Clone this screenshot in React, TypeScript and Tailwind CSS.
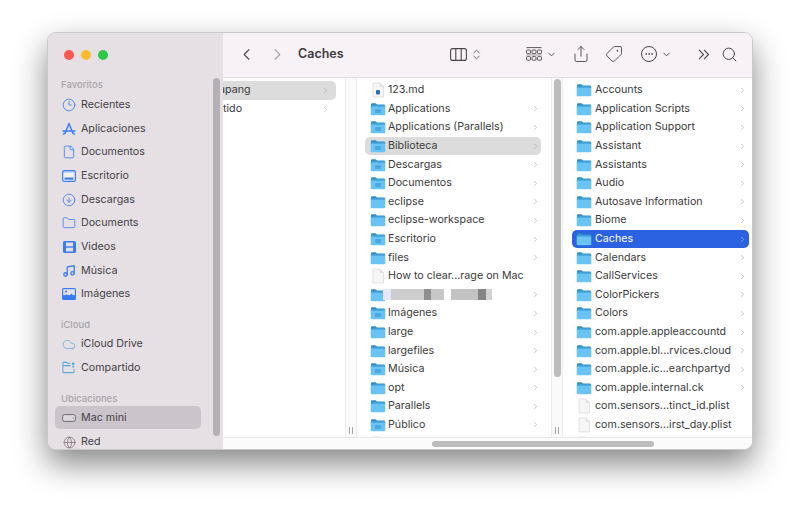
import { ChevronLeft, ChevronRight, ChevronDown, ChevronsUpDown, Share, Tag, Ellipsis, Search, Clock3, File, CircleArrowDown, Folder as FolderLine, Music, Cloud, Globe } from 'lucide-react'

type Row = { name: string; kind?: 'folder' | 'file' | 'doc' | 'blur'; glyph?: boolean; arrow?: boolean; selected?: boolean; active?: boolean }

const col2: Row[] = [
  { name: '123.md', kind: 'doc', arrow: false },
  { name: 'Applications', glyph: true },
  { name: 'Applications (Parallels)', glyph: true },
  { name: 'Biblioteca', glyph: true, active: true },
  { name: 'Descargas', glyph: true },
  { name: 'Documentos', glyph: true },
  { name: 'eclipse' },
  { name: 'eclipse-workspace' },
  { name: 'Escritorio', glyph: true },
  { name: 'files' },
  { name: 'How to clear...rage on Mac', kind: 'file', arrow: false },
  { name: '', kind: 'blur' },
  { name: 'Imágenes', glyph: true },
  { name: 'large' },
  { name: 'largefiles' },
  { name: 'Música', glyph: true },
  { name: 'opt' },
  { name: 'Parallels' },
  { name: 'Público', glyph: true },
  { name: '', kind: 'file', arrow: false },
]

const col3: Row[] = [
  { name: 'Accounts' },
  { name: 'Application Scripts' },
  { name: 'Application Support' },
  { name: 'Assistant' },
  { name: 'Assistants' },
  { name: 'Audio' },
  { name: 'Autosave Information' },
  { name: 'Biome' },
  { name: 'Caches', selected: true },
  { name: 'Calendars' },
  { name: 'CallServices' },
  { name: 'ColorPickers' },
  { name: 'Colors' },
  { name: 'com.apple.appleaccountd' },
  { name: 'com.apple.bl...rvices.cloud' },
  { name: 'com.apple.ic...earchpartyd' },
  { name: 'com.apple.internal.ck' },
  { name: 'com.sensors...tinct_id.plist', kind: 'file', arrow: false },
  { name: 'com.sensors...irst_day.plist', kind: 'file', arrow: false },
  { name: '', kind: 'file', arrow: false },
]

function FolderIcon({ glyph }: { glyph?: boolean }) {
  return (
    <svg width="16" height="14" viewBox="0 0 16 14" className="shrink-0">
      <path d="M1 2.4C1 1.7 1.5 1.2 2.2 1.2h3.4l1.4 1.2h6.8c.7 0 1.2.5 1.2 1.2V5H1z" fill="#2f8fc9" />
      <rect x="0.7" y="3.6" width="14.6" height="9.6" rx="1.2" fill="#69c4f5" />
      <rect x="0.7" y="3.4" width="14.6" height="1" rx="0.5" fill="#3393cf" />
      {glyph && <rect x="5" y="7" width="6" height="4" rx="1" fill="#4aa8de" />}
    </svg>
  )
}

function FileIcon({ doc }: { doc?: boolean }) {
  return (
    <svg width="16" height="16" viewBox="0 0 16 16" className="shrink-0">
      <path d="M3 1h7l3.5 3.5V15H3z" fill="#f6f6f6" stroke="#d6d6d6" strokeWidth="0.7" />
      <path d="M10 1v3.5h3.5" fill="#e6e6e6" stroke="#d6d6d6" strokeWidth="0.5" />
      {doc && <rect x="6" y="8" width="4" height="4.5" rx="1" fill="#2b6cb8" />}
    </svg>
  )
}

function BlurName() {
  return (
    <div className="-ml-[5px] flex h-[11px] items-center">
      <div className="h-[11px] w-[8px] bg-[#e4e8f8]" />
      <div className="h-[11px] w-[33px] bg-[#cdcdcd]" />
      <div className="h-[11px] w-[7px] bg-[#8f8f8f]" />
      <div className="h-[11px] w-[13px] bg-[#c6c6c6]" />
      <div className="w-[7px]" />
      <div className="h-[11px] w-[27px] bg-[#c2c2c2]" />
      <div className="h-[11px] w-[8px] bg-[#858585]" />
      <div className="h-[11px] w-[6px] bg-[#d2d2d2]" />
    </div>
  )
}

function FileRow({ row, third }: { row: Row; third?: boolean }) {
  const kind = row.kind ?? 'folder'
  const showArrow = row.arrow !== false
  let bg = ''
  if (row.selected) bg = 'bg-[#2a62e2] text-white'
  else if (row.active) bg = 'bg-[#dcdcdc]'
  return (
    <div className={`flex h-[18.6px] items-center rounded-[5px] ${third ? 'ml-[9px] mr-[3px] gap-[3px] pl-[4px] pr-[2px]' : 'ml-[8px] mr-[10px] gap-[2px] pl-[5px] pr-[1px]'} ${bg}`}>
      <div className="flex w-[16px] shrink-0 justify-center">
        {kind === 'folder' && <FolderIcon glyph={row.glyph} />}
        {kind === 'blur' && <FolderIcon />}
        {kind === 'file' && <FileIcon />}
        {kind === 'doc' && <FileIcon doc />}
      </div>
      {kind === 'blur' ? <BlurName /> : <span className="flex-1 truncate">{row.name}</span>}
      {kind === 'blur' && <div className="flex-1" />}
      {showArrow && <ChevronRight size={9} strokeWidth={1.6} className={row.selected ? 'text-[#b9cdf8]' : 'text-[#a8a8a8]'} />}
    </div>
  )
}

function SideRow({ icon, label, active, low }: { icon: React.ReactNode; label: string; active?: boolean; low?: boolean }) {
  return (
    <div className={`ml-[7px] mr-[22px] flex h-[23.7px] shrink-0 items-center gap-[5px] rounded-[5px] pl-[7px] ${low ? 'pt-[2px]' : ''} ${active ? 'bg-[#cbc5cb]' : ''}`}>
      <div className="flex w-[14px] shrink-0 justify-center">{icon}</div>
      <span>{label}</span>
    </div>
  )
}

function SideHead({ label, top }: { label: string; top?: boolean }) {
  return <div className={`ml-[13px] shrink-0 text-[9.5px] font-medium leading-[14px] text-[#a9a4a9] ${top ? 'h-[15px]' : 'mt-[12px] h-[14px]'}`}>{label}</div>
}

const blue = '#3a7df2'

function AppsIcon() {
  return (
    <svg width="14" height="14" viewBox="0 0 14 14" fill="none" stroke={blue} strokeWidth="1.5" strokeLinecap="round">
      <path d="M7 1.5L3 11.5M7 1.5l4 10M1 9h12M1.5 12l1.5-1M12.5 12L11 11" />
    </svg>
  )
}

function DesktopIcon() {
  return (
    <svg width="14" height="12" viewBox="0 0 14 12">
      <rect x="0.6" y="0.6" width="12.8" height="10.8" rx="1.6" fill="#fff" fillOpacity="0.5" stroke={blue} strokeWidth="1.2" />
      <rect x="2.6" y="7.5" width="8.8" height="2.2" fill={blue} />
      <rect x="1.2" y="1.2" width="11.6" height="1.6" fill={blue} fillOpacity="0.3" />
    </svg>
  )
}

function VideoIcon() {
  return (
    <svg width="13" height="12" viewBox="0 0 13 12">
      <rect x="0" y="0" width="13" height="12" rx="1.6" fill={blue} />
      <rect x="3" y="1.5" width="7" height="3.8" fill="#e6e0e5" />
      <rect x="3" y="6.7" width="7" height="3.8" fill="#e6e0e5" />
    </svg>
  )
}

function PhotoIcon() {
  return (
    <svg width="14" height="12" viewBox="0 0 14 12">
      <rect x="0" y="0" width="14" height="12" rx="1.6" fill={blue} />
      <rect x="1.2" y="1.2" width="11.6" height="6" fill="#e6e0e5" />
      <circle cx="4" cy="3.5" r="1.1" fill={blue} />
      <path d="M1.2 9l3.4-3 2.4 2 2.4-2.6 3.4 3.6V10.8H1.2z" fill={blue} />
    </svg>
  )
}

function SharedIcon() {
  return (
    <svg width="15" height="13" viewBox="0 0 15 13" fill="none" stroke="#5aa9d6" strokeWidth="1.1">
      <path d="M1 3.5V11a1 1 0 001 1h10a1 1 0 001-1V8M1 3.5V2a1 1 0 011-1h3l1 1h3M1 4.5h8" />
      <circle cx="12" cy="2.6" r="1.5" fill="#5aa9d6" stroke="none" />
      <path d="M12 4.5v2" strokeWidth="2" />
    </svg>
  )
}

function DiskIcon() {
  return (
    <svg width="14" height="8" viewBox="0 0 14 8" fill="none">
      <rect x="0.6" y="0.6" width="12.8" height="6.8" rx="1.8" fill="#dcd7dc" stroke="#6f6b70" strokeWidth="1" />
      <circle cx="11" cy="4" r="0.6" fill="#6f6b70" />
    </svg>
  )
}

function ColumnsIcon() {
  return (
    <svg width="17" height="13" viewBox="0 0 17 13" fill="none" stroke="#4a464a" strokeWidth="1.1">
      <rect x="0.6" y="0.6" width="15.8" height="11.8" rx="2" />
      <path d="M5.8 0.6v11.8M11.2 0.6v11.8" />
    </svg>
  )
}

function GridIcon() {
  return (
    <svg width="16" height="14" viewBox="0 0 16 14" fill="none" stroke="#4a464a" strokeWidth="0.9">
      <path d="M0.5 0.6h15" />
      <rect x="0.5" y="3" width="4" height="3.6" rx="0.8" />
      <rect x="6" y="3" width="4" height="3.6" rx="0.8" />
      <rect x="11.5" y="3" width="4" height="3.6" rx="0.8" />
      <path d="M0.5 8h15" strokeWidth="0.5" />
      <rect x="0.5" y="9.6" width="4" height="3.6" rx="0.8" />
      <rect x="6" y="9.6" width="4" height="3.6" rx="0.8" />
      <rect x="11.5" y="9.6" width="4" height="3.6" rx="0.8" />
    </svg>
  )
}

function DoubleArrow() {
  return (
    <svg width="12" height="11" viewBox="0 0 12 11" fill="none" stroke="#4a464a" strokeWidth="1.1">
      <path d="M1 0.8l4.5 4.7L1 10.2M6 0.8l4.5 4.7L6 10.2" />
    </svg>
  )
}

function Lane({ thumb }: { thumb?: boolean }) {
  return (
    <div className="relative w-[12px] shrink-0 border-x border-[#ececec] bg-[#fafafa]">
      {thumb && <div className="absolute left-[2px] top-[1px] h-[298px] w-[7px] rounded-full bg-[#bcbcbc]" />}
      <div className="absolute bottom-[3px] left-[3px] flex gap-[2px]">
        <div className="h-[7px] w-px bg-[#a5a5a5]" />
        <div className="h-[7px] w-px bg-[#a5a5a5]" />
      </div>
    </div>
  )
}

export default function App() {
  return (
    <div className="h-[512px] w-[800px] overflow-hidden bg-white pl-[47px] pt-[32px] font-['Inter',sans-serif] text-[10.7px] text-[#3b3b3b]">
      <div className="flex h-[418px] w-[706px] overflow-hidden rounded-[9px] border border-[#c9c9c9] bg-white shadow-[0_14px_32px_rgba(0,0,0,0.48)]">
        <aside className="relative flex w-[175px] shrink-0 flex-col overflow-hidden bg-[#e6e0e5] text-[#444044]">
          <div className="flex h-[45px] shrink-0 items-center gap-[7px] pb-[2px] pl-[16px]">
            <div className="h-[10px] w-[10px] rounded-full bg-[#fc5753]" />
            <div className="h-[10px] w-[10px] rounded-full bg-[#fdbc2e]" />
            <div className="h-[10px] w-[10px] rounded-full bg-[#33c748]" />
          </div>
          <SideHead label="Favoritos" top />
          <SideRow label="Recientes" icon={<Clock3 size={14} strokeWidth={1.4} color={blue} />} />
          <SideRow label="Aplicaciones" icon={<AppsIcon />} />
          <SideRow label="Documentos" icon={<File size={14} strokeWidth={1.4} color={blue} />} />
          <SideRow label="Escritorio" icon={<DesktopIcon />} />
          <SideRow label="Descargas" icon={<CircleArrowDown size={14} strokeWidth={1.4} color={blue} />} />
          <SideRow label="Documents" icon={<FolderLine size={14} strokeWidth={1.4} color={blue} />} />
          <SideRow label="Videos" icon={<VideoIcon />} />
          <SideRow label="Música" icon={<Music size={14} strokeWidth={2.2} color={blue} />} />
          <SideRow label="Imágenes" icon={<PhotoIcon />} />
          <SideHead label="iCloud" />
          <SideRow label="iCloud Drive" icon={<Cloud size={15} strokeWidth={1.2} color="#5aa9d6" />} />
          <SideRow label="Compartido" icon={<SharedIcon />} />
          <SideHead label="Ubicaciones" />
          <SideRow label="Mac mini" active low icon={<DiskIcon />} />
          <SideRow label="Red" low icon={<Globe size={13} strokeWidth={1.3} color="#6f6b70" />} />
          <div className="absolute left-[165px] top-[45px] h-[358px] w-[7px] rounded-full bg-[#b5b0b5]" />
        </aside>

        <main className="flex min-w-0 flex-1 flex-col">
          <header className="flex h-[45px] shrink-0 items-center border-b border-[#e2dde1] bg-[#f8f1f6] pb-[2px] text-[#4a464a]">
            <ChevronLeft size={19} strokeWidth={1.4} className="ml-[14px]" />
            <ChevronRight size={19} strokeWidth={1.4} className="ml-[12px] text-[#a5a1a5]" />
            <span className="ml-[11px] w-[152px] text-[12.5px] font-semibold text-[#3e3a3e]">Caches</span>
            <ColumnsIcon />
            <ChevronsUpDown size={13} strokeWidth={1.5} className="ml-[3px]" />
            <div className="ml-[43px]"><GridIcon /></div>
            <ChevronDown size={11} strokeWidth={2} className="ml-[4px]" />
            <Share size={18} strokeWidth={1.2} className="ml-[15px]" />
            <Tag size={18} strokeWidth={1.2} className="ml-[15px] rotate-90" />
            <div className="ml-[18px] flex h-[16px] w-[16px] items-center justify-center rounded-full border border-[#4a464a]">
              <Ellipsis size={10} strokeWidth={2} />
            </div>
            <ChevronDown size={11} strokeWidth={2} className="ml-[4px]" />
            <div className="ml-[26px]"><DoubleArrow /></div>
            <Search size={17} strokeWidth={1.4} className="ml-[11px]" />
          </header>

          <div className="flex min-h-0 flex-1 overflow-hidden">
            <div className="w-[122px] shrink-0 overflow-hidden pt-[3px]">
              <div className="mr-[9px] flex h-[19px] items-center rounded-r-[5px] bg-[#dcdcdc] pr-[6px]">
                <span className="-ml-[4px] flex-1">apang</span>
                <ChevronRight size={9} strokeWidth={1.6} className="text-[#a8a8a8]" />
              </div>
              <div className="mr-[9px] flex h-[18.6px] items-center pr-[6px]">
                <span className="flex-1">tido</span>
                <ChevronRight size={9} strokeWidth={1.6} className="text-[#a8a8a8]" />
              </div>
            </div>
            <Lane />
            <div className="w-[194px] shrink-0 overflow-hidden pt-[3px]">
              {col2.map((row, i) => (
                <FileRow key={i} row={row} />
              ))}
            </div>
            <Lane thumb />
            <div className="min-w-0 flex-1 overflow-hidden pt-[3px]">
              {col3.map((row, i) => (
                <FileRow key={i} row={row} third />
              ))}
            </div>
          </div>

          <div className="relative h-[12px] shrink-0 border-t border-[#e8e8e8] bg-[#fbfbfb]">
            <div className="absolute left-[209px] top-[3px] h-[6px] w-[222px] rounded-full bg-[#bcbcbc]" />
          </div>
        </main>
      </div>
    </div>
  )
}
